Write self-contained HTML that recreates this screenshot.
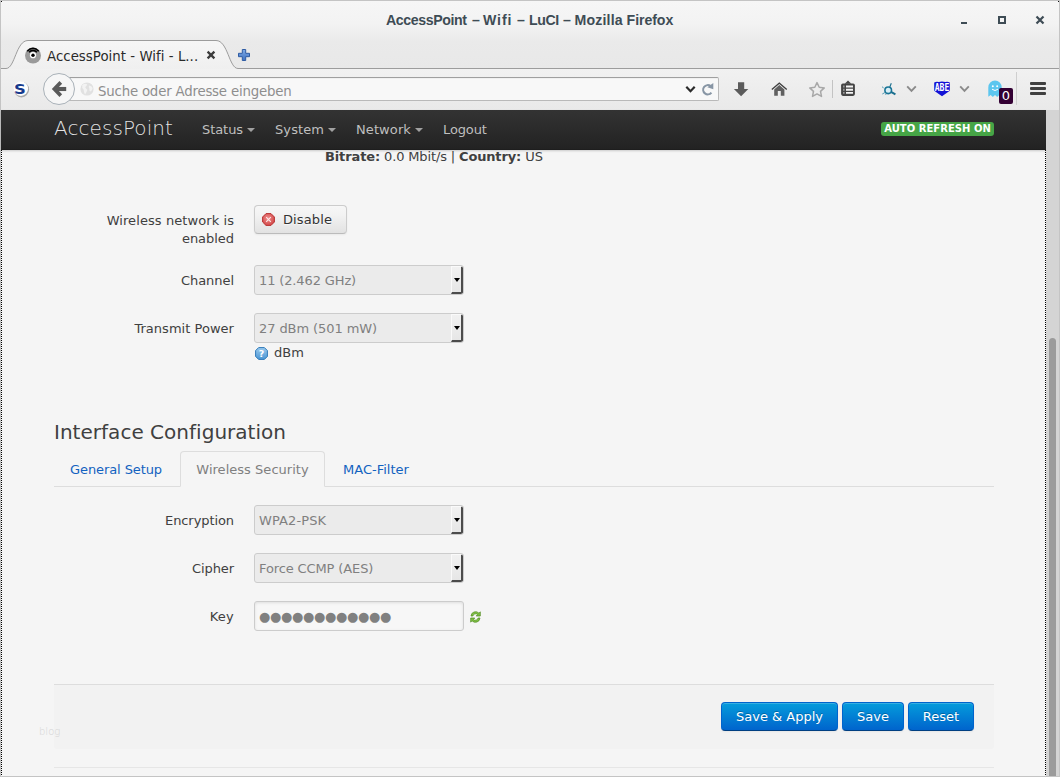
<!DOCTYPE html>
<html lang="en">
<head>
<meta charset="utf-8">
<title>AccessPoint – Wifi – LuCI – Mozilla Firefox</title>
<style>
*{box-sizing:border-box;margin:0;padding:0}
html,body{width:1060px;height:777px;overflow:hidden;background:#ebebeb}
body{position:relative;font-family:"DejaVu Sans","Liberation Sans",sans-serif;font-size:13px;line-height:18px;color:#404040}
.abs{position:absolute}
/* window chrome */
#win{left:0;top:0;width:1060px;height:777px;background:#ececec;border:1px solid #c4c4c4}
#titlebar{left:1px;top:1px;width:1058px;height:68px;background:linear-gradient(#f6f6f6 0,#f3f3f3 22px,#eaeaea 40px,#e8e8e8 68px)}
#title span{position:absolute;top:0}
#title{left:386px;top:10px;width:300px;height:20px;white-space:nowrap;font-family:"Liberation Sans",sans-serif;font-weight:bold;font-size:14.15px;color:#3e4c55;line-height:20px}
#navbar{left:1px;top:69px;width:1058px;height:41px;background:linear-gradient(#f1f1f1,#e9e9e9)}
#urlbar{left:60px;top:77px;width:659px;height:24px;border:1px solid #b9b9b9;border-top-color:#9f9f9f;border-radius:2px;background:#f8f8f8;box-shadow:inset 0 1px 0 rgba(0,0,0,.03)}
.ui{font-size:13px;line-height:18px;white-space:nowrap}
/* page */
#page{left:1px;top:110px;width:1045px;height:666px;background:#f5f5f5;overflow:hidden}
#topbar{left:1px;top:110px;width:1045px;height:40px;background:linear-gradient(#333,#222);box-shadow:0 1px 2px rgba(0,0,0,.18), inset 0 -1px 0 rgba(0,0,0,.1)}
#brand{left:54px;top:116px;font-size:20px;font-weight:200;color:rgba(255,255,255,.88);letter-spacing:.08px;line-height:24px}
.nv{top:121px;font-size:13px;line-height:18px;color:#bfbfbf;white-space:nowrap}
.ct{top:128px;width:0;height:0;border-left:4px solid transparent;border-right:4px solid transparent;border-top:4px solid #bfbfbf;opacity:.8}
#badge{left:881px;top:122px;width:113px;height:14px;background:#46a546;border-radius:3px;color:#fff;font-weight:bold;font-size:10px;line-height:14px;text-align:center;white-space:nowrap;letter-spacing:.03px}
#focus{left:1px;top:150px;width:1045px;height:625px;border:1px dotted #000;border-top:none;border-bottom:none}
#scroll{left:1046px;top:110px;width:13px;height:666px;background:#d4d4d4}
#thumb{left:3px;top:228px;width:7px;height:438px;background:#9b9b9b;border-radius:4px 4px 0 0}
.lbl{left:54px;width:180px;text-align:right;color:#404040}
.sel{left:254px;width:210px;height:30px;border:1px solid #ccc;border-radius:3px;background:#ebebeb;color:#808080;line-height:28px;padding-left:4px;padding-top:1px;white-space:nowrap;overflow:hidden}
.sel i{position:absolute;right:0;top:0;width:12px;height:28px;background:linear-gradient(#f1f1f1,#e6e6e6);border-left:1px solid #fafafa;border-top:1px solid #fafafa;border-right:2px solid #4c4c4c;border-bottom:2px solid #4c4c4c;border-radius:0 2px 2px 0}
.sel i:after{content:"";position:absolute;left:2px;top:11px;border-left:3px solid transparent;border-right:3px solid transparent;border-top:4px solid #000}
.btn{height:29px;border-radius:4px;font-size:13px;line-height:27px;text-align:center;white-space:nowrap}
.pbtn{top:702px;line-height:28px;color:#fff;background:linear-gradient(#049cdb,#0064cd);border:1px solid #0064cd;border-bottom-color:#003f81;text-shadow:0 -1px 0 rgba(0,0,0,.25);box-shadow:inset 0 1px 0 rgba(255,255,255,.2),0 1px 2px rgba(0,0,0,.05)}
</style>
</head>
<body>
<div id="win" class="abs"></div>
<div id="titlebar" class="abs"></div>
<div id="title" class="abs"><span style="left:0;letter-spacing:-.38px">AccessPoint</span> <span style="left:86px">–</span> <span style="left:97px;letter-spacing:.9px">Wifi</span> <span style="left:131px">–</span> <span style="left:143px;letter-spacing:-.4px">LuCI</span> <span style="left:177px">–</span> <span style="left:188.500px;letter-spacing:.17px">Mozilla</span> <span style="left:240.600px;letter-spacing:-.08px">Firefox</span></div>
<!-- window buttons -->
<div class="abs" style="left:961px;top:22px;width:6px;height:2px;background:#3e4c55"></div>
<div class="abs" style="left:998px;top:16px;width:8px;height:8px;border:2px solid #3e4c55"></div>
<svg class="abs" style="left:1035px;top:15px" width="10" height="10" viewBox="0 0 10 10"><path d="M1.5 1.5L8.5 8.5M8.5 1.5L1.5 8.5" stroke="#3e4c55" stroke-width="2.2" fill="none"/></svg>
<!-- tab strip -->
<svg class="abs" style="left:0;top:36px" width="1060" height="40" viewBox="0 0 1060 40">
  <defs><linearGradient id="tg" x1="0" y1="0" x2="0" y2="1"><stop offset="0" stop-color="#f6f6f6"/><stop offset="1" stop-color="#efefef"/></linearGradient></defs>
  <path d="M1 32.5 L6 32.5 C15 32.5 16 4.5 28 4.5 L216 4.5 C228 4.5 229 32.5 238 32.5 L241 32.5 L241 34 L1 34 Z" fill="url(#tg)"/>
  <path d="M1 32.5 L6 32.5 C15 32.5 16 4.5 28 4.5 L216 4.5 C228 4.5 229 32.5 238 32.5 L241 32.5 L1059 32.5" fill="none" stroke="#9c9c9c" stroke-width="1"/>
</svg>
<div id="navbar" class="abs"></div>
<div class="abs" style="left:1px;top:1px;width:1px;height:1px;background:#111"></div><div class="abs" style="left:1058px;top:1px;width:1px;height:1px;background:#111"></div>
<!-- favicon -->
<svg class="abs" style="left:24px;top:46px" width="18" height="18" viewBox="0 0 18 18">
  <circle cx="9" cy="9.5" r="8" fill="#9a9a9a"/>
  <circle cx="9" cy="9.200" r="3.100" fill="#fff"/>
  <circle cx="9" cy="9.300" r="1.700" fill="#000"/>
  <path d="M3.2 5.2 Q9 -0.8 14.8 5.2" stroke="#000" stroke-width="1.6" fill="none"/>
  <path d="M5 6.2 Q9 2.6 13 6.2" stroke="#000" stroke-width="1.5" fill="none"/>
</svg>
<div class="abs ui" style="left:47px;top:48px;color:#2a2a2a;font-size:13.33px;letter-spacing:.03px">AccessPoint - Wifi - L...</div>
<svg class="abs" style="left:206px;top:50px" width="10" height="10" viewBox="0 0 10 10"><path d="M1.6 1.6L8.4 8.4M8.4 1.6L1.6 8.4" stroke="#3c3c3c" stroke-width="2.3" fill="none"/></svg>
<svg class="abs" style="left:237px;top:48px" width="14" height="14" viewBox="0 0 14 14"><defs><linearGradient id="pg" x1="0" y1="0" x2="0" y2="1"><stop offset="0" stop-color="#7eaae6"/><stop offset="1" stop-color="#3f72c2"/></linearGradient></defs><path d="M5.300 1.500h3.400v3.800h3.800v3.400H8.700v3.800H5.300V8.700H1.500V5.300h3.800z" fill="url(#pg)" stroke="#2f5ca3" stroke-width="1" stroke-linejoin="round"/></svg>
<!-- nav toolbar -->
<svg class="abs" style="left:12px;top:79px" width="19" height="20" viewBox="0 0 19 20">
  <ellipse cx="9.5" cy="10.6" rx="7.6" ry="7.8" fill="#8f8f8f" opacity=".7"/>
  <circle cx="8.8" cy="9.6" r="7.3" fill="#fdfdfd"/>
</svg>
<div class="abs" style="left:14px;top:78.500px;font-weight:bold;font-size:14.500px;line-height:20px;color:#173a8c;transform:scaleX(1.13);transform-origin:0 0">S</div>
<div id="urlbar" class="abs"></div>
<div class="abs" style="left:43px;top:73px;width:32px;height:32px;border-radius:16px;border:1px solid #a9b1b8;background:#f6f6f6"></div>
<svg class="abs" style="left:51px;top:80px" width="17" height="18" viewBox="0 0 17 18"><path d="M9.800 2.400 L3.400 9 L9.800 15.600" stroke="#5a5a5a" stroke-width="3.700" fill="none" stroke-linejoin="miter"/><path d="M4 9 H15.200" stroke="#5a5a5a" stroke-width="4.100"/></svg>
<svg class="abs" style="left:80px;top:82px" width="14" height="14" viewBox="0 0 14 14"><circle cx="7" cy="7" r="6.600" fill="#e1e1e1"/><path d="M2.200 3.200 Q4.500 1 7.200 2.200 Q6.800 4.200 5.200 5 Q5.800 6.800 7.400 7.800 Q6.600 10.800 5 12.400 Q3.800 10 3.600 7.600 Q1.600 6 2.200 3.200 Z M9 3.400 Q11.600 3.600 12.600 6 Q12.400 8.600 10.600 9.600 Q8.800 8.600 9.400 6.400 Q8.400 4.800 9 3.400 Z" fill="#f3f3f3"/></svg>
<div class="abs ui" style="left:98px;top:83px;color:#8e8e8e;font-size:13.33px;letter-spacing:-.2px">Suche oder Adresse eingeben</div>
<svg class="abs" style="left:685px;top:84.500px" width="11" height="9" viewBox="0 0 11 9"><path d="M1.300 1.800 L5.500 6.200 L9.700 1.800" stroke="#2b2b2b" stroke-width="2.200" fill="none"/></svg>
<svg class="abs" style="left:700px;top:82px" width="15" height="14" viewBox="0 0 15 14"><path d="M11.400 10.600 A4.600 4.600 0 1 1 10.600 4.100" stroke="#8896a5" stroke-width="2.100" fill="none"/><path d="M13.300 1 V7.200 L7.300 5.200 Z" fill="#8896a5"/></svg>
<svg class="abs" style="left:733px;top:81px" width="16" height="16" viewBox="0 0 16 16"><path d="M5 1.200 H11.200 V8 H15.300 L8.100 15.200 L0.900 8 H5 Z" fill="#5b5b5b"/></svg>
<svg class="abs" style="left:771px;top:81px" width="17" height="16" viewBox="0 0 17 16"><path d="M8.300 1.200 L16.200 8 L15.300 9 L8.300 3.100 L1.300 9 L0.400 8 Z" fill="#3f3f3f"/><path d="M3.200 8.400 L8.300 4.100 L13.400 8.400 V14.800 H9.800 V10 H6.800 V14.800 H3.200 Z" fill="#606060"/></svg>
<svg class="abs" style="left:808px;top:81px" width="18" height="17" viewBox="0 0 18 17"><path d="M9 1.600 L11.200 6.300 L16.300 6.900 L12.500 10.400 L13.500 15.400 L9 12.900 L4.500 15.400 L5.500 10.400 L1.700 6.900 L6.800 6.300 Z" fill="none" stroke="#a8a8a8" stroke-width="1.500" stroke-linejoin="round"/></svg>
<div class="abs" style="left:832px;top:80px;width:1px;height:18px;background:#c3c3c3"></div>
<svg class="abs" style="left:840px;top:80px" width="16" height="17" viewBox="0 0 16 17"><path d="M4.700 3.700 L8 0.600 L11.300 3.700 Z" fill="#454545"/><rect x="1.100" y="3.400" width="13.800" height="12.500" rx="1.800" fill="#454545"/><path d="M6 6.500H13M6 9.700H13M6 12.900H13" stroke="#f4f4f4" stroke-width="1.900"/><path d="M3 6.500H4.600M3 9.700H4.600M3 12.900H4.600" stroke="#9a9a9a" stroke-width="1.900"/></svg>
<!-- addon icons -->
<svg class="abs" style="left:880px;top:82px" width="17" height="15" viewBox="0 0 17 15"><circle cx="8.200" cy="8.300" r="3.300" fill="#d9eef6" stroke="#1a7596" stroke-width="1.600"/><path d="M11.300 1.300L9.800 5" stroke="#1a6f8f" stroke-width="1.100" fill="none"/><path d="M2 4.800L3.600 5.800M2.300 12L4.800 10.600M5.600 12.800L6.300 11.600" stroke="#2a86a8" stroke-width="1" fill="none" opacity=".8"/><path d="M11 9.800L15.400 12.300" stroke="#1a6f8f" stroke-width="1.900" fill="none"/></svg>
<svg class="abs" style="left:906px;top:85px" width="11" height="8" viewBox="0 0 11 8"><path d="M1.200 1.400 L5.500 5.800 L9.800 1.400" stroke="#8a8a8a" stroke-width="1.900" fill="none"/></svg>
<svg class="abs" style="left:933px;top:81px" width="18" height="16" viewBox="0 0 18 16"><path d="M1.200 1.400 Q3.500 0.200 5.800 1 Q9 -0.200 12.200 1 Q14.500 0.200 16.800 1.400 V9.800 L9 15.200 L1.200 9.800 Z" fill="#1212d6"/><text x="9" y="9.700" font-family="DejaVu Sans Mono, Liberation Mono, monospace" font-size="10.200" font-weight="bold" fill="#fff" text-anchor="middle" textLength="14.600" lengthAdjust="spacingAndGlyphs">ABE</text></svg>
<svg class="abs" style="left:959px;top:85px" width="11" height="8" viewBox="0 0 11 8"><path d="M1.200 1.400 L5.500 5.800 L9.800 1.400" stroke="#8a8a8a" stroke-width="1.900" fill="none"/></svg>
<svg class="abs" style="left:987px;top:80px" width="16" height="18" viewBox="0 0 16 18"><path d="M1.300 16.800 V7.500 A6.500 6.700 0 0 1 14.700 7.500 V16.800 L12.300 14.900 L10.200 16.900 L8 14.900 L5.800 16.900 L3.700 14.900 Z" fill="#5cc6ef"/><circle cx="5.800" cy="6.300" r="1" fill="#fff"/><circle cx="10.200" cy="6.300" r="1" fill="#fff"/><path d="M5 9.200 Q8 11.800 11 9.200" stroke="#fff" stroke-width="1" fill="none"/></svg>
<div class="abs" style="left:999px;top:88px;width:14px;height:16px;border-radius:2px;background:#330033;color:#fff;font-size:13px;line-height:16px;text-align:center">0</div>
<div class="abs" style="left:1016px;top:72px;width:1px;height:33px;background:#cfcfcf"></div>
<div class="abs" style="left:1030px;top:82px;width:16px;height:3px;border-radius:1px;background:#404040"></div>
<div class="abs" style="left:1030px;top:87px;width:16px;height:3px;border-radius:1px;background:#404040"></div>
<div class="abs" style="left:1030px;top:92px;width:16px;height:3px;border-radius:1px;background:#404040"></div>
<div id="page" class="abs"></div>

<!-- page content (screen coordinates) -->
<div class="abs" style="left:325px;top:148px;white-space:nowrap;color:#404040"><b style="letter-spacing:-.12px">Bitrate:</b><span style="letter-spacing:-.14px;white-space:pre"> 0.0 Mbit/s | </span><b style="letter-spacing:-.16px">Country:</b> US</div>

<div class="abs lbl" style="top:212px"><span style="letter-spacing:.08px">Wireless network is</span><br><span style="letter-spacing:-.04px">enabled</span></div>
<div class="abs btn" style="left:254px;top:205px;width:93px;height:29px;border:1px solid #ccc;border-bottom-color:#bbb;background:linear-gradient(#f6f6f6,#f3f3f3 30%,#e2e2e2);color:#333;text-align:left;padding-left:28px;line-height:27px;letter-spacing:.11px;text-shadow:0 1px 1px rgba(255,255,255,.75);box-shadow:inset 0 1px 0 rgba(255,255,255,.2),0 1px 2px rgba(0,0,0,.05)">Disable</div>
<svg class="abs" style="left:262px;top:213px" width="13" height="13" viewBox="0 0 13 13"><defs><radialGradient id="rg" cx=".45" cy=".4" r=".7"><stop offset="0" stop-color="#ee8d8d"/><stop offset="1" stop-color="#cf4040"/></radialGradient></defs><path d="M4 0.600 H9 L12.400 4 V9 L9 12.400 H4 L0.600 9 V4 Z" fill="url(#rg)" stroke="#b83232" stroke-width="1"/><path d="M4.200 4.200 L8.800 8.800 M8.800 4.200 L4.200 8.800" stroke="#fdeaea" stroke-width="1.100"/></svg>

<div class="abs lbl" style="top:272px;letter-spacing:-.05px">Channel</div>
<div class="abs sel" style="top:265px;letter-spacing:-.13px">11 (2.462 GHz)<i></i></div>

<div class="abs lbl" style="top:320px;letter-spacing:.03px">Transmit Power</div>
<div class="abs sel" style="top:313px;letter-spacing:-.08px">27 dBm (501 mW)<i></i></div>
<svg class="abs" style="left:255px;top:347px" width="13" height="13" viewBox="0 0 13 13"><defs><linearGradient id="hg" x1="0" y1="0" x2="0" y2="1"><stop offset="0" stop-color="#9ccbee"/><stop offset="1" stop-color="#4a95d3"/></linearGradient></defs><path d="M3.600 0.600 H9.400 L12.400 3.600 V9.400 L9.400 12.400 H3.600 L0.600 9.400 V3.600 Z" fill="url(#hg)" stroke="#2f79b9" stroke-width="1"/><text x="6.500" y="10" font-family="DejaVu Sans, sans-serif" font-weight="bold" font-size="9.500" fill="#fff" text-anchor="middle">?</text></svg>
<div class="abs" style="left:274px;top:344px;color:#404040;letter-spacing:.05px">dBm</div>

<div class="abs" style="left:54px;top:420px;font-size:20px;line-height:24px;color:#404040;white-space:nowrap;letter-spacing:.02px">Interface Configuration</div>

<div class="abs" style="left:54px;top:486px;width:940px;height:1px;background:#ddd"></div>
<div class="abs" style="left:70px;top:461px;color:#1262c0;letter-spacing:-.09px;white-space:nowrap">General Setup</div>
<div class="abs" style="left:180px;top:451px;width:145px;height:36px;border:1px solid #ddd;border-bottom-color:#f5f5f5;border-radius:4px 4px 0 0;background:#f5f5f5;color:#808080;line-height:36px;text-align:center;letter-spacing:.03px;white-space:nowrap">Wireless Security</div>
<div class="abs" style="left:343px;top:461px;color:#1262c0;white-space:nowrap">MAC-Filter</div>

<div class="abs lbl" style="top:512px;letter-spacing:-.08px">Encryption</div>
<div class="abs sel" style="top:505px;letter-spacing:.1px">WPA2-PSK<i></i></div>
<div class="abs lbl" style="top:560px;letter-spacing:-.09px">Cipher</div>
<div class="abs sel" style="top:553px;letter-spacing:-.12px">Force CCMP (AES)<i></i></div>
<div class="abs lbl" style="top:608px;letter-spacing:.26px">Key</div>
<div class="abs" style="left:254px;top:601px;width:210px;height:30px;border:1px solid #ccc;border-radius:3px;background:#f7f7f7;box-shadow:inset 0 1px 3px rgba(0,0,0,.1);color:#808080;padding-left:4px;font-size:13px;line-height:28px;padding-top:1px;letter-spacing:-.34px;white-space:nowrap;overflow:hidden">●●●●●●●●●●●●</div>
<svg class="abs" style="left:469px;top:610px" width="13" height="14" viewBox="0 0 13 14"><path d="M2 6 A4.600 4.600 0 0 1 10 3.200 L11.300 1.800 V6 H7.200 L8.700 4.500 A2.900 2.900 0 0 0 3.900 6 Z" fill="#7fc043" stroke="#4f8a1f" stroke-width=".7"/><path d="M11 8 A4.600 4.600 0 0 1 3 10.800 L1.700 12.200 V8 H5.800 L4.300 9.500 A2.900 2.900 0 0 0 9.100 8 Z" fill="#7fc043" stroke="#4f8a1f" stroke-width=".7"/></svg>

<div class="abs" style="left:54px;top:684px;width:940px;height:65px;background:#f2f2f2;border-top:1px solid #ddd;border-radius:0 0 3px 3px"></div>
<div class="abs btn pbtn" style="left:721px;width:117px">Save &amp; Apply</div>
<div class="abs btn pbtn" style="left:842px;width:62px">Save</div>
<div class="abs btn pbtn" style="left:908px;width:66px">Reset</div>
<div class="abs" style="left:54px;top:767px;width:940px;height:1px;background:#e6e6e6"></div>
<div class="abs" style="left:39px;top:723px;font-size:10px;color:#d4d4d4;font-weight:200">blog</div>

<div id="topbar" class="abs"></div>
<div id="brand" class="abs">AccessPoint</div>
<div class="abs nv" style="left:202px;letter-spacing:-.07px">Status</div><i class="abs ct" style="left:247px"></i>
<div class="abs nv" style="left:275px;letter-spacing:.09px">System</div><i class="abs ct" style="left:328px"></i>
<div class="abs nv" style="left:356px;letter-spacing:.1px">Network</div><i class="abs ct" style="left:415px"></i>
<div class="abs nv" style="left:443px;letter-spacing:-.12px">Logout</div>
<div id="badge" class="abs">AUTO REFRESH ON</div>

<div id="focus" class="abs"></div>
<div id="scroll" class="abs"><div id="thumb" class="abs"></div></div>
</body>
</html>
